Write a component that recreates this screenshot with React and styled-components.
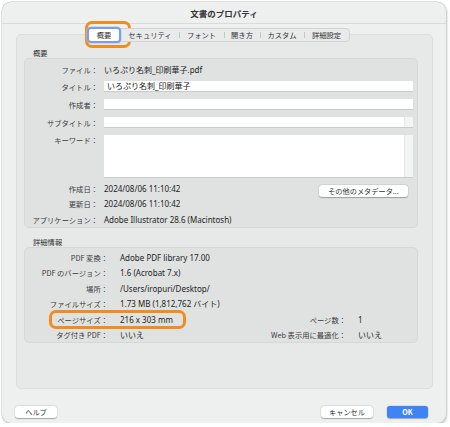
import { Fragment } from "react";
import styled, { createGlobalStyle } from "styled-components";

const GlobalStyle = createGlobalStyle`
  body {
    margin: 0;
    background: #ffffff;
    font-family: "Noto Sans CJK JP", "Noto Sans", sans-serif;
    color: #2b2b2b;
  }
`;

const latin = `"Noto Sans", "Noto Sans CJK JP", sans-serif`;

const Window = styled.div`
  position: relative;
  width: 444px;
  height: 421px;
  margin: 2px 0 0 2px;
  border-radius: 9px;
  background: #eef0f0;
  box-shadow: 0 0 0 0.5px #c2c4c4, 1px 2px 3px rgba(0, 0, 0, 0.22);
  display: flex;
  flex-direction: column;
`;

const TitleBar = styled.div`
  height: 21px;
  border-bottom: 1px solid #d9dbdb;
  display: flex;
  align-items: center;
  justify-content: center;
  font-size: 8.5px;
  font-weight: 700;
  color: #333;
`;

const Body = styled.div`
  padding: 4px 13px 0 14px;
  display: flex;
  flex-direction: column;
`;

const TabBar = styled.div`
  position: relative;
  z-index: 1;
  align-self: flex-start;
  margin-left: 73px;
  height: 14px;
  display: flex;
  background: #e9ebeb;
  border: 1px solid #d2d4d4;
  border-radius: 4px;
  box-sizing: border-box;
`;

const Tab = styled.div`
  position: relative;
  width: ${({ w }) => w}px;
  box-sizing: border-box;
  display: flex;
  align-items: center;
  justify-content: center;
  font-size: 7.3px;
  color: #333;
  white-space: nowrap;
  ${({ active }) =>
    active &&
    `
    margin: -2px 0 -2px -3px;
    background: #ffffff;
    border: 2px solid #7e9cee;
    border-radius: 4px;
    box-shadow: 0 0 0 0.5px #b9c8f4;
  `}
  &::before {
    content: "";
    display: ${({ divider }) => (divider ? "block" : "none")};
    position: absolute;
    left: 0;
    top: 3px;
    bottom: 3px;
    width: 1px;
    background: #c6c8c8;
  }
`;

const Panel = styled.div`
  margin-top: -8px;
  height: 355px;
  box-sizing: border-box;
  background: #e7e9e9;
  border: 1px solid #dcdede;
  border-radius: 5px;
  padding: 0 14px 0 7px;
  display: flex;
  flex-direction: column;
`;

const SectionLabel = styled.div`
  margin: ${({ top }) => top}px 0 0 9px;
  height: 10px;
  line-height: 10px;
  font-size: 7.3px;
  color: #333;
`;

const Group = styled.div`
  height: ${({ h }) => h}px;
  box-sizing: border-box;
  background: #e0e2e2;
  border: 1px solid #d6d8d8;
  border-radius: 5px;
`;

const InfoRows = styled.div`
  display: flex;
  flex-direction: column;
  padding-top: 4px;
`;

const Row = styled.div`
  display: flex;
  align-items: ${({ top }) => (top ? "flex-start" : "center")};
  height: ${({ h }) => h}px;
  margin-top: ${({ mt }) => mt || 0}px;
`;

const Label = styled.div`
  width: 73px;
  flex-shrink: 0;
  text-align: right;
  font-size: 7.3px;
  line-height: 10px;
  color: #3a3a3a;
  white-space: nowrap;
`;

const Value = styled.div`
  margin-left: 6px;
  font-family: ${latin};
  font-size: 8px;
  line-height: 10px;
  color: #222;
  white-space: nowrap;
`;

const Field = styled.div`
  position: relative;
  margin-left: 6px;
  width: 309px;
  height: ${({ h }) => h}px;
  box-sizing: border-box;
  background: #ffffff;
  border-bottom: 1px solid #c9cbcb;
  font-family: ${latin};
  font-size: 8px;
  line-height: 10px;
  padding: 0 3px;
  color: #222;
  white-space: nowrap;
  &::after {
    content: "";
    display: ${({ scroll }) => (scroll ? "block" : "none")};
    position: absolute;
    top: 0;
    bottom: 0;
    right: 0;
    width: 8px;
    background: #f3f4f4;
    border-left: 1px solid #e8e9e9;
  }
`;

const Button = styled.button`
  width: ${({ w }) => w}px;
  height: 12px;
  padding: 0;
  border: none;
  border-radius: 3px;
  background: ${({ primary }) => (primary ? "#3f83f5" : "#ffffff")};
  color: ${({ primary }) => (primary ? "#ffffff" : "#333")};
  font-family: inherit;
  font-size: 7.2px;
  font-weight: ${({ primary }) => (primary ? 700 : 400)};
  line-height: 12px;
  white-space: nowrap;
  box-shadow: 0 0.5px 1px rgba(0, 0, 0, 0.28), 0 0 0 0.5px rgba(0, 0, 0, 0.08);
`;

const MetaButton = styled(Button)`
  margin: 4px 9px 0 auto;
  align-self: flex-start;
`;

const DetailGrid = styled.div`
  display: grid;
  grid-template-columns: 83px 114px 100px 1fr;
  column-gap: 12px;
  grid-auto-rows: 15.5px;
  align-items: center;
  padding-top: 2px;
  line-height: 10px;
  white-space: nowrap;
`;

const DLabel = styled.div`
  text-align: right;
  font-size: 7.3px;
  color: #3a3a3a;
`;

const DValue = styled.div`
  font-family: ${latin};
  font-size: 8px;
  color: #222;
`;

const Footer = styled.div`
  display: flex;
  gap: 14px;
  padding: 0 18px 0 13px;
  margin-top: 17px;
`;

const Spacer = styled.div`
  flex: 1;
`;

const Highlight = styled.div`
  position: absolute;
  left: ${({ x }) => x}px;
  top: ${({ y }) => y}px;
  width: ${({ w }) => w}px;
  height: ${({ h }) => h}px;
  box-sizing: border-box;
  border: 3px solid #f28c1c;
  border-radius: 7px;
  pointer-events: none;
`;

const tabs = [
  { name: "概要", w: 34, active: true },
  { name: "セキュリティ", w: 58 },
  { name: "フォント", w: 45, divider: true },
  { name: "開き方", w: 36, divider: true },
  { name: "カスタム", w: 44, divider: true },
  { name: "詳細設定", w: 45, divider: true },
];

const details = [
  ["PDF 変換：", "Adobe PDF library 17.00", "", ""],
  ["PDF のバージョン：", "1.6 (Acrobat 7.x)", "", ""],
  ["場所：", "/Users/iropuri/Desktop/", "", ""],
  ["ファイルサイズ：", "1.73 MB (1,812,762 バイト)", "", ""],
  ["ページサイズ：", "216 x 303 mm", "ページ数：", "1"],
  ["タグ付き PDF：", "いいえ", "Web 表示用に最適化：", "いいえ"],
];

export default function App() {
  return (
    <>
      <GlobalStyle />
      <Window>
        <TitleBar>文書のプロパティ</TitleBar>
        <Body>
          <TabBar>
            {tabs.map((t) => (
              <Tab key={t.name} w={t.w} active={t.active} divider={t.divider}>
                {t.name}
              </Tab>
            ))}
          </TabBar>
          <Panel>
            <SectionLabel top={13}>概要</SectionLabel>
            <Group h={170}>
              <InfoRows>
                <Row h={14}>
                  <Label>ファイル：</Label>
                  <Value>いろぷり名刺_印刷華子.pdf</Value>
                </Row>
                <Row h={11} mt={4}>
                  <Label>タイトル：</Label>
                  <Field h={11}>いろぷり名刺_印刷華子</Field>
                </Row>
                <Row h={11} mt={7}>
                  <Label>作成者：</Label>
                  <Field h={11} />
                </Row>
                <Row h={11} mt={7}>
                  <Label>サブタイトル：</Label>
                  <Field h={11} scroll />
                </Row>
                <Row h={43} mt={7} top>
                  <Label>キーワード：</Label>
                  <Field h={43} scroll />
                </Row>
                <Row h={15} mt={3}>
                  <Label>作成日：</Label>
                  <Value>2024/08/06 11:10:42</Value>
                  <MetaButton w={89}>その他のメタデータ...</MetaButton>
                </Row>
                <Row h={15}>
                  <Label>更新日：</Label>
                  <Value>2024/08/06 11:10:42</Value>
                </Row>
                <Row h={15} mt={1}>
                  <Label>アプリケーション：</Label>
                  <Value>Adobe Illustrator 28.6 (Macintosh)</Value>
                </Row>
              </InfoRows>
            </Group>
            <SectionLabel top={9}>詳細情報</SectionLabel>
            <Group h={96}>
              <DetailGrid>
                {details.map(([l1, v1, l2, v2]) => (
                  <Fragment key={l1}>
                    <DLabel>{l1}</DLabel>
                    <DValue>{v1}</DValue>
                    <DLabel>{l2}</DLabel>
                    <DValue>{v2}</DValue>
                  </Fragment>
                ))}
              </DetailGrid>
            </Group>
          </Panel>
        </Body>
        <Footer>
          <Button w={42}>ヘルプ</Button>
          <Spacer />
          <Button w={52}>キャンセル</Button>
          <Button w={41} primary>
            OK
          </Button>
        </Footer>
        <Highlight x={83} y={19} w={46} h={27} />
        <Highlight x={47} y={308} w={137} h={19} />
      </Window>
    </>
  );
}
